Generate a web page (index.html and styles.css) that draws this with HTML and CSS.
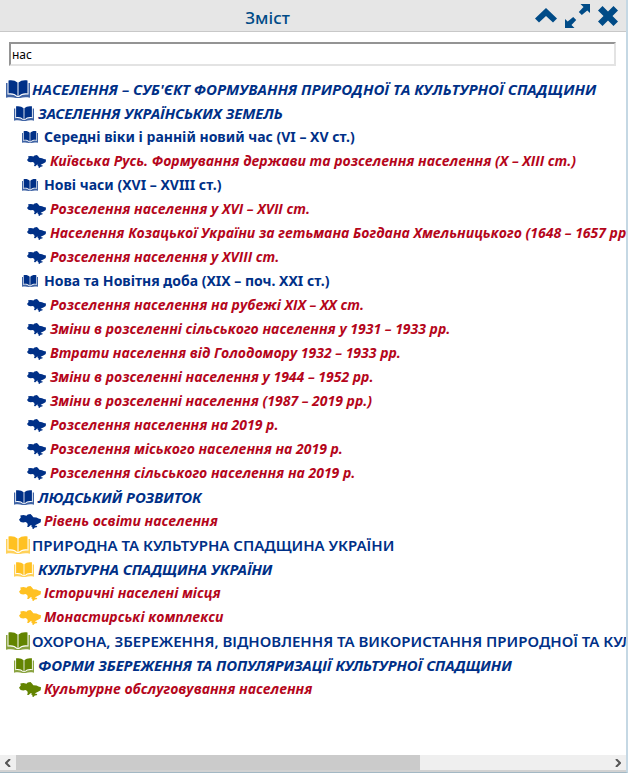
FILE: index.html
```
<!DOCTYPE html>
<html lang="uk">
<head>
<meta charset="utf-8">
<title>Зміст</title>
<link rel="stylesheet" href="styles.css">
</head>
<body>
<svg class="sprite" aria-hidden="true">
  <symbol id="book" viewBox="0 0 24 18">
    <path d="M11.500 2.600C9.500.5 6-.3 2.500.4v13c3.600-.6 6.700.2 9 2.800zM12.500 2.600C14.500.5 18-.3 21.500.4v13c-3.600-.6-6.700.2-9 2.800z"/>
    <path d="M0 3h1.500v11.600c3.800-.6 7 .1 9.500 2.300h2c2.500-2.200 5.700-2.900 9.500-2.300V3H24v14.700c-3.600-.7-7-.6-9.800.3H9.800C7 17.100 3.600 17 0 17.700z" opacity=".75"/>
  </symbol>
  <symbol id="map" viewBox="0 0 22 15">
    <path d="M0 5.800 1.800 3.400 1.300 1.400 4.500 1 7.500 1.800 8.700.5 11.500 0 13 1.500 14.300 3.200 17.500 3.600 19.500 4.600 22 5.200 21.700 8.200 19.500 9.500 17 10.800 15.700 11.600 18.300 12.100 17.700 13.300 15.800 13.500 14.500 15 13.100 14.200 13.500 12.900 12 12.300 13 11.300 11.500 11.200 9.700 13 8 12.800 8.800 10.900 8.200 9 6.500 8 4.200 8.500 1.700 7.900z"/>
  </symbol>
</svg>
<header class="bar">
  <h1 class="title">Зміст</h1>
  <div class="tools">
    <button class="tool" type="button" aria-label="Згорнути"><svg width="22" height="15" viewBox="0 0 22 15"><path d="M11 0 22 10.500 18 14.500 11 8 4 14.500 0 10.500z"/></svg></button>
    <button class="tool" type="button" aria-label="Розгорнути"><svg width="25" height="24" viewBox="0 0 25 24"><path d="M15.500 0H25v9l-2.700-2.600-5.500 4.600-3-3L18.500 2.900zM9.500 24H0v-9l2.700 2.600L8.200 13l3 3-4.700 5.100z"/></svg></button>
    <button class="tool" type="button" aria-label="Закрити"><svg width="20" height="20" viewBox="0 0 20 20"><path d="M4.500 0 10 5.500 15.500 0 20 4.500 14.500 10 20 15.500 15.500 20 10 14.500 4.500 20 0 15.500 5.500 10 0 4.500z"/></svg></button>
  </div>
</header>
<main class="content">
  <input class="search" type="text" value="нас" aria-label="Пошук">
  <ul class="tree">
    <li class="blue">
      <a class="row top slanted" href="#"><svg><use href="#book"/></svg>НАСЕЛЕННЯ – СУБ'ЄКТ ФОРМУВАННЯ ПРИРОДНОЇ ТА КУЛЬТУРНОЇ СПАДЩИНИ</a>
      <ul>
        <li>
          <a class="row section" href="#"><svg><use href="#book"/></svg>ЗАСЕЛЕННЯ УКРАЇНСЬКИХ ЗЕМЕЛЬ</a>
          <ul>
            <li>
              <a class="row group" href="#"><svg><use href="#book"/></svg>Середні віки і ранній новий час (VI – XV ст.)</a>
              <ul class="maps">
                <li><a class="row leaf" href="#"><svg><use href="#map"/></svg>Київська Русь. Формування держави та розселення населення (X – XIII ст.)</a></li>
              </ul>
            </li>
            <li>
              <a class="row group" href="#"><svg><use href="#book"/></svg>Нові часи (XVI – XVIII ст.)</a>
              <ul class="maps">
                <li><a class="row leaf" href="#"><svg><use href="#map"/></svg>Розселення населення у XVI – XVII ст.</a></li>
                <li><a class="row leaf" href="#"><svg><use href="#map"/></svg>Населення Козацької України за гетьмана Богдана Хмельницького (1648 – 1657 рр.)</a></li>
                <li><a class="row leaf" href="#"><svg><use href="#map"/></svg>Розселення населення у XVIII ст.</a></li>
              </ul>
            </li>
            <li>
              <a class="row group" href="#"><svg><use href="#book"/></svg>Нова та Новітня доба (XIX – поч. XXI ст.)</a>
              <ul class="maps">
                <li><a class="row leaf" href="#"><svg><use href="#map"/></svg>Розселення населення на рубежі XIX – XX ст.</a></li>
                <li><a class="row leaf" href="#"><svg><use href="#map"/></svg>Зміни в розселенні сільського населення у 1931 – 1933 рр.</a></li>
                <li><a class="row leaf" href="#"><svg><use href="#map"/></svg>Втрати населення від Голодомору 1932 – 1933 рр.</a></li>
                <li><a class="row leaf" href="#"><svg><use href="#map"/></svg>Зміни в розселенні населення у 1944 – 1952 рр.</a></li>
                <li><a class="row leaf" href="#"><svg><use href="#map"/></svg>Зміни в розселенні населення (1987 – 2019 рр.)</a></li>
                <li><a class="row leaf" href="#"><svg><use href="#map"/></svg>Розселення населення на 2019 р.</a></li>
                <li><a class="row leaf" href="#"><svg><use href="#map"/></svg>Розселення міського населення на 2019 р.</a></li>
                <li><a class="row leaf" href="#"><svg><use href="#map"/></svg>Розселення сільського населення на 2019 р.</a></li>
              </ul>
            </li>
          </ul>
        </li>
        <li>
          <a class="row section" href="#"><svg><use href="#book"/></svg>ЛЮДСЬКИЙ РОЗВИТОК</a>
          <ul class="maps">
            <li><a class="row leaf wide" href="#"><svg><use href="#map"/></svg>Рівень освіти населення</a></li>
          </ul>
        </li>
      </ul>
    </li>
    <li class="yellow">
      <a class="row top" href="#"><svg><use href="#book"/></svg>ПРИРОДНА ТА КУЛЬТУРНА СПАДЩИНА УКРАЇНИ</a>
      <ul>
        <li>
          <a class="row section" href="#"><svg><use href="#book"/></svg>КУЛЬТУРНА СПАДЩИНА УКРАЇНИ</a>
          <ul class="maps">
            <li><a class="row leaf wide" href="#"><svg><use href="#map"/></svg>Історичні населені місця</a></li>
            <li><a class="row leaf wide" href="#"><svg><use href="#map"/></svg>Монастирські комплекси</a></li>
          </ul>
        </li>
      </ul>
    </li>
    <li class="green">
      <a class="row top" href="#"><svg><use href="#book"/></svg>ОХОРОНА, ЗБЕРЕЖЕННЯ, ВІДНОВЛЕННЯ ТА ВИКОРИСТАННЯ ПРИРОДНОЇ ТА КУЛЬТУРНОЇ СПАДЩИНИ</a>
      <ul>
        <li>
          <a class="row section" href="#"><svg><use href="#book"/></svg>ФОРМИ ЗБЕРЕЖЕННЯ ТА ПОПУЛЯРИЗАЦІЇ КУЛЬТУРНОЇ СПАДЩИНИ</a>
          <ul class="maps">
            <li><a class="row leaf wide" href="#"><svg><use href="#map"/></svg>Культурне обслуговування населення</a></li>
          </ul>
        </li>
      </ul>
    </li>
  </ul>
</main>
<div class="scroll">
  <button class="arrow" type="button" aria-label="Ліворуч"><svg width="6" height="8" viewBox="0 0 6 8"><path d="M5 0 1 4l4 4"/></svg></button>
  <div class="track"><div class="thumb"></div></div>
  <button class="arrow" type="button" aria-label="Праворуч"><svg width="6" height="8" viewBox="0 0 6 8"><path d="M1 0l4 4-4 4"/></svg></button>
</div>
</body>
</html>
```

FILE: styles.css
```
* { box-sizing: border-box; }

body {
  margin: 0;
  height: 100vh;
  display: flex;
  flex-direction: column;
  overflow: hidden;
  background: #fff;
  border-right: 2px solid #c5d8e4;
  border-bottom: 1px solid #a3b8c4;
  font-family: "Noto Sans", "Open Sans", sans-serif;
}

.sprite { position: absolute; width: 0; height: 0; }

button { border: 0; padding: 0; background: none; }

.bar {
  display: flex;
  align-items: center;
  flex: none;
  height: 32px;
  padding-right: 8px;
  background: #e6e6e6;
  border-bottom: 1px solid #c8c8c8;
}

.title {
  flex: 1;
  margin: 0;
  padding-top: 4px;
  text-align: center;
  font-size: 17px;
  line-height: 24px;
  font-weight: 500;
  color: #004b87;
}

.tools { display: flex; align-items: center; gap: 8px; }
.tool { display: flex; fill: #004b87; }

.content { flex: 1; min-height: 0; overflow: hidden; }

.search {
  display: block;
  width: calc(100% - 19px);
  height: 24px;
  margin: 10px 10px 11px 9px;
  padding: 0 1px;
  border: 2px solid;
  border-color: #949494 #e3e3e3 #e3e3e3 #949494;
  font: 12px "Noto Sans", sans-serif;
  color: #000;
}

.tree, .tree ul { list-style: none; margin: 0; padding: 0 0 0 8px; }
.tree { padding-left: 6px; }
.tree ul.maps { padding-left: 5px; }

.blue { fill: #003087; }
.yellow { fill: #ffc122; }
.green { fill: #638400; }

.row {
  display: flex;
  align-items: center;
  height: 24px;
  font-size: 15px;
  line-height: 24px;
  font-weight: 600;
  color: #003087;
  white-space: nowrap;
  text-decoration: none;
}
.row svg { flex: none; }

.slanted, .leaf { font-family: "Open Sans", sans-serif; font-weight: 700; font-style: italic; }
.section { font-weight: 700; font-style: italic; }
.group { font-size: 14px; font-weight: 700; }
.leaf { font-size: 14px; color: #b5061b; }

.top svg { width: 24px; height: 18px; margin-right: 2px; }
.section svg { width: 20px; height: 15px; margin-right: 4px; }
.group svg { width: 16px; height: 12px; margin-right: 6px; }
.leaf svg { width: 19px; height: 13px; margin-right: 4px; }
.wide svg { width: 22px; height: 15px; margin-right: 3px; }

.scroll {
  display: flex;
  flex: none;
  height: 17px;
  background: #efefef;
  border-bottom: 2px solid #d2d2d2;
}
.arrow {
  display: flex;
  align-items: center;
  justify-content: center;
  width: 16px;
}
.arrow path { fill: none; stroke: #555; stroke-width: 2; }
.track { flex: 1; }
.thumb { width: 68%; height: 100%; background: #cbcbcb; }
```
